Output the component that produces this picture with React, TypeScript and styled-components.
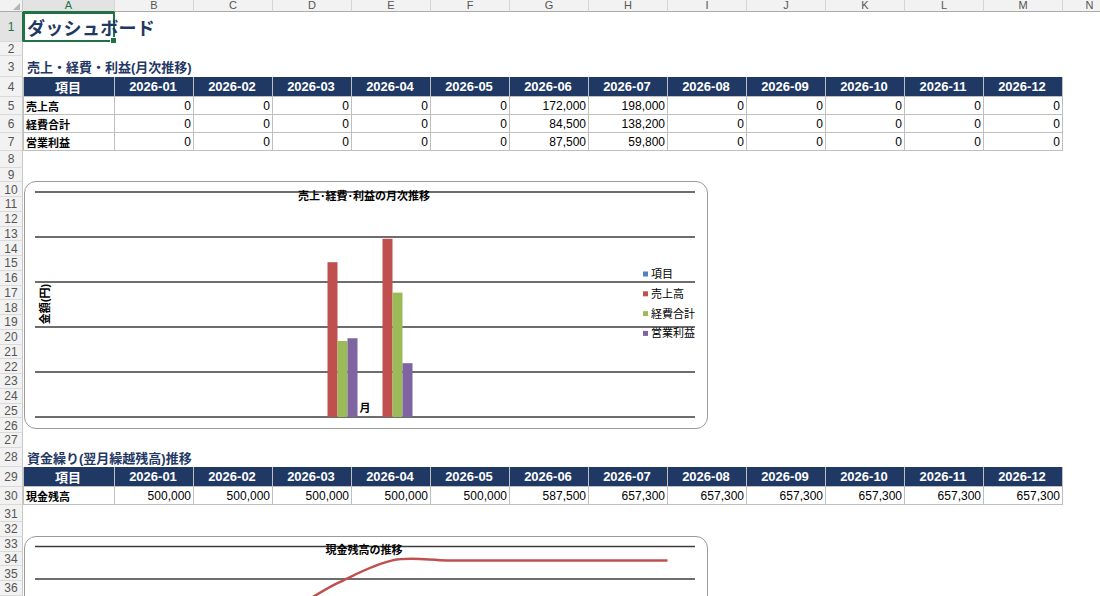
import React from 'react';
import styled, { createGlobalStyle } from 'styled-components';

const GlobalStyle = createGlobalStyle`
  html, body {
    margin: 0;
    padding: 0;
    background: #fff;
    overflow: hidden;
  }
  body {
    font-family: "Liberation Sans", "Noto Sans CJK JP", sans-serif;
  }
`;

const NAVY = '#1f3864';
const GREEN = '#217346';
const HEAD_W = 23;
const COL_A = 92;
const COL_W = 79;
const COL_N = 54;
const FONT = '"Liberation Sans", "Noto Sans CJK JP", sans-serif';

const months = Array.from({ length: 12 }, (_, i) => `2026-${String(i + 1).padStart(2, '0')}`);
const letters = 'ABCDEFGHIJKLMN'.split('');

const pl = [
  { label: '売上高', values: [0, 0, 0, 0, 0, 172000, 198000, 0, 0, 0, 0, 0] },
  { label: '経費合計', values: [0, 0, 0, 0, 0, 84500, 138200, 0, 0, 0, 0, 0] },
  { label: '営業利益', values: [0, 0, 0, 0, 0, 87500, 59800, 0, 0, 0, 0, 0] },
];
const cash = [500000, 500000, 500000, 500000, 500000, 587500, 657300, 657300, 657300, 657300, 657300, 657300];

// row heights, rows 1..36
const rowHeights: number[] = [
  30, 14, 21, 20, 18, 18, 18, 16.5,
  ...Array(19).fill(14.75),
  19.25, 20, 18, 17,
  ...Array(5).fill(14.75),
];

const series = [
  { name: '項目', color: '#4f81bd', values: Array(12).fill(0) },
  { name: '売上高', color: '#c0504d', values: pl[0].values },
  { name: '経費合計', color: '#9bbb59', values: pl[1].values },
  { name: '営業利益', color: '#8064a2', values: pl[2].values },
];

const fmt = (n: number) => n.toLocaleString('en-US');

const colWidth = (i: number) => (i === 0 ? COL_A : i === 13 ? COL_N : COL_W);

const Sheet = styled.div`
  width: 1100px;
  height: 596px;
  overflow: hidden;
  position: relative;
  background: #fff;
`;

const ColHeaderRow = styled.div`
  display: flex;
  height: 12px;
`;

const Corner = styled.div`
  width: ${HEAD_W}px;
  flex-shrink: 0;
  box-sizing: border-box;
  background: #f2f2f2;
  border-right: 1px solid #c8c8c8;
  border-bottom: 1px solid #ababab;
  display: flex;
  align-items: flex-end;
  justify-content: flex-end;
  padding: 0 2px 1px 0;
`;

const ColHead = styled.div<{ $w: number; $active?: boolean }>`
  width: ${(p) => p.$w}px;
  flex-shrink: 0;
  box-sizing: border-box;
  background: ${(p) => (p.$active ? '#e3e3e3' : '#f2f2f2')};
  border-right: 1px solid #d6d6d6;
  border-bottom: 1px solid ${(p) => (p.$active ? GREEN : '#ababab')};
  color: ${(p) => (p.$active ? GREEN : '#555')};
  font-size: 11px;
  line-height: 11px;
  text-align: center;
`;

const Body = styled.div`
  position: relative;
  display: flex;
  flex-direction: column;
`;

const Row = styled.div<{ $h: number }>`
  display: flex;
  height: ${(p) => p.$h}px;
  flex-shrink: 0;
`;

const RowNum = styled.div<{ $active?: boolean }>`
  width: ${HEAD_W}px;
  flex-shrink: 0;
  box-sizing: border-box;
  background: ${(p) => (p.$active ? '#e3e3e3' : '#f2f2f2')};
  border-right: 1px solid ${(p) => (p.$active ? GREEN : '#c8c8c8')};
  border-bottom: 1px solid #dadada;
  color: ${(p) => (p.$active ? GREEN : '#555')};
  font-size: 12px;
  display: flex;
  align-items: center;
  justify-content: center;
  padding-top: 1px;
`;

const SelectedCell = styled.div`
  position: relative;
  width: ${COL_A}px;
  flex-shrink: 0;
  box-sizing: border-box;
  border: 2px solid ${GREEN};
  display: flex;
  align-items: center;
  padding-left: 2px;
  white-space: nowrap;
`;

const Handle = styled.div`
  position: absolute;
  right: -4px;
  bottom: -4px;
  width: 5px;
  height: 5px;
  background: ${GREEN};
  border: 1px solid #fff;
`;

const PageTitle = styled.span`
  font-family: "Noto Sans CJK JP", sans-serif;
  font-size: 18px;
  font-weight: 700;
  color: ${NAVY};
  letter-spacing: 0.3px;
`;

const SectionTitle = styled.div`
  display: flex;
  align-items: center;
  padding-left: 4px;
  font-size: 13px;
  font-weight: 700;
  color: ${NAVY};
  white-space: nowrap;
`;

const Cell = styled.div<{ $w: number; $head?: boolean; $first?: boolean; $label?: boolean }>`
  width: ${(p) => p.$w}px;
  flex-shrink: 0;
  box-sizing: border-box;
  display: flex;
  align-items: center;
  justify-content: ${(p) => (p.$head ? 'center' : p.$label ? 'flex-start' : 'flex-end')};
  padding: ${(p) => (p.$label ? '0 0 0 2px' : '0 2px 0 0')};
  border-right: 1px solid #bfbfbf;
  border-bottom: 1px solid #bfbfbf;
  border-left: ${(p) => (p.$first ? '1px solid #bfbfbf' : 'none')};
  background: ${(p) => (p.$head ? NAVY : '#fff')};
  color: ${(p) => (p.$head ? '#fff' : '#000')};
  font-size: ${(p) => (p.$head ? 13 : p.$label ? 11 : 12)}px;
  font-weight: ${(p) => (p.$head || p.$label ? 700 : 400)};
  white-space: nowrap;
`;

const ChartBox = styled.div<{ $top: number; $h: number }>`
  position: absolute;
  left: 24px;
  top: ${(p) => p.$top}px;
  width: 684px;
  height: ${(p) => p.$h}px;
  box-sizing: border-box;
  border: 1px solid #9a9a9a;
  border-radius: 12px;
  background: #fff;
  overflow: hidden;
`;

const ChartSvg = styled.svg`
  display: block;
  font-family: ${FONT};
`;

const HeaderRow = ({ h, n }: { h: number; n: number }) => (
  <Row $h={h}>
    <RowNum>{n}</RowNum>
    <Cell $w={COL_A} $head $first>
      項目
    </Cell>
    {months.map((m) => (
      <Cell key={m} $w={COL_W} $head>
        {m}
      </Cell>
    ))}
  </Row>
);

const DataRow = ({ h, n, label, values }: { h: number; n: number; label: string; values: number[] }) => (
  <Row $h={h}>
    <RowNum>{n}</RowNum>
    <Cell $w={COL_A} $label $first>
      {label}
    </Cell>
    {values.map((v, i) => (
      <Cell key={i} $w={COL_W}>
        {fmt(v)}
      </Cell>
    ))}
  </Row>
);

// plot area in page coordinates
const PX0 = 35;
const PX1 = 695;
const CAT = (PX1 - PX0) / 12;

const BarChart = () => {
  const base = 417;
  const unit = 45 / 50000;
  return (
    <ChartBox $top={181 - 12} $h={248}>
      <ChartSvg width={682} height={246}>
        <g transform="translate(-25,-182)">
          {[0, 1, 2, 3, 4, 5].map((k) => (
            <line key={k} x1={PX0} x2={PX1} y1={base - 45 * k} y2={base - 45 * k} stroke="#3c3c3c" strokeWidth={1.4} />
          ))}
          {series.map((s, si) =>
            s.values.map((v, i) =>
              v > 0 ? (
                <rect
                  key={`${si}-${i}`}
                  x={PX0 + i * CAT + 7.5 + si * 10}
                  y={base - v * unit}
                  width={10}
                  height={v * unit}
                  fill={s.color}
                />
              ) : null,
            ),
          )}
          <text x={364} y={200} fontSize={11} fontWeight={700} textAnchor="middle" fill="#000">
            売上･経費･利益の月次推移
          </text>
          <text
            x={44.5}
            y={308}
            fontSize={11}
            fontWeight={700}
            textAnchor="middle"
            fill="#000"
            transform="rotate(-90 44.5 304)"
          >
            金額(円)
          </text>
          <text x={365} y={412} fontSize={11} fontWeight={700} textAnchor="middle" fill="#000">
            月
          </text>
          {series.map((s, i) => {
            const cy = 274 + i * 19.8;
            return (
              <g key={s.name}>
                <rect x={643} y={cy - 2.5} width={5} height={5} fill={s.color} />
                <text x={651} y={cy + 4} fontSize={11} fill="#000">
                  {s.name}
                </text>
              </g>
            );
          })}
        </g>
      </ChartSvg>
    </ChartBox>
  );
};

const smoothPath = (pts: [number, number][]) => {
  let d = `M${pts[0][0]},${pts[0][1]}`;
  for (let i = 0; i < pts.length - 1; i++) {
    const p0 = pts[i - 1] ?? pts[i];
    const p1 = pts[i];
    const p2 = pts[i + 1];
    const p3 = pts[i + 2] ?? p2;
    const c1x = p1[0] + (p2[0] - p0[0]) / 6;
    const c1y = p1[1] + (p2[1] - p0[1]) / 6;
    const c2x = p2[0] - (p3[0] - p1[0]) / 6;
    const c2y = p2[1] - (p3[1] - p1[1]) / 6;
    d += ` C${c1x},${c1y} ${c2x},${c2y} ${p2[0]},${p2[1]}`;
  }
  return d;
};

const LineChart = () => {
  const y500 = 611.5;
  const step = 32.5;
  const yOf = (v: number) => y500 - ((v - 500000) / 100000) * step;
  const pts = cash.map((v, i) => [PX0 + (i + 0.5) * CAT, yOf(v)] as [number, number]);
  return (
    <ChartBox $top={536 - 12} $h={248}>
      <ChartSvg width={682} height={246}>
        <g transform="translate(-25,-537)">
          {[0, 1, 2, 3, 4, 5].map((k) => (
            <line key={k} x1={PX0} x2={PX1} y1={yOf(700000 - k * 100000)} y2={yOf(700000 - k * 100000)} stroke="#3c3c3c" strokeWidth={1.4} />
          ))}
          <text x={364} y={554} fontSize={11} fontWeight={700} textAnchor="middle" fill="#000">
            現金残高の推移
          </text>
          <path d={smoothPath(pts)} fill="none" stroke="#c0504d" strokeWidth={2.5} />
        </g>
      </ChartSvg>
    </ChartBox>
  );
};

const App = () => {
  const content: Record<number, React.ReactNode> = {
    1: (
      <SelectedCell>
        <PageTitle>ダッシュボード</PageTitle>
        <Handle />
      </SelectedCell>
    ),
    3: <SectionTitle>売上・経費・利益(月次推移)</SectionTitle>,
    28: <SectionTitle>資金繰り(翌月繰越残高)推移</SectionTitle>,
  };

  return (
    <>
      <GlobalStyle />
      <Sheet>
        <ColHeaderRow>
          <Corner>
            <svg width="7" height="7" viewBox="0 0 7 7">
              <polygon points="7,0 7,7 0,7" fill="#b4b4b4" />
            </svg>
          </Corner>
          {letters.map((l, i) => (
            <ColHead key={l} $w={colWidth(i)} $active={i === 0}>
              {l}
            </ColHead>
          ))}
        </ColHeaderRow>
        <Body>
          {rowHeights.map((h, idx) => {
            const n = idx + 1;
            if (n === 4 || n === 29) return <HeaderRow key={n} h={h} n={n} />;
            if (n >= 5 && n <= 7) return <DataRow key={n} h={h} n={n} {...pl[n - 5]} />;
            if (n === 30) return <DataRow key={n} h={h} n={n} label="現金残高" values={cash} />;
            return (
              <Row key={n} $h={h}>
                <RowNum $active={n === 1}>{n}</RowNum>
                {content[n]}
              </Row>
            );
          })}
          <BarChart />
          <LineChart />
        </Body>
      </Sheet>
    </>
  );
};

export default App;
